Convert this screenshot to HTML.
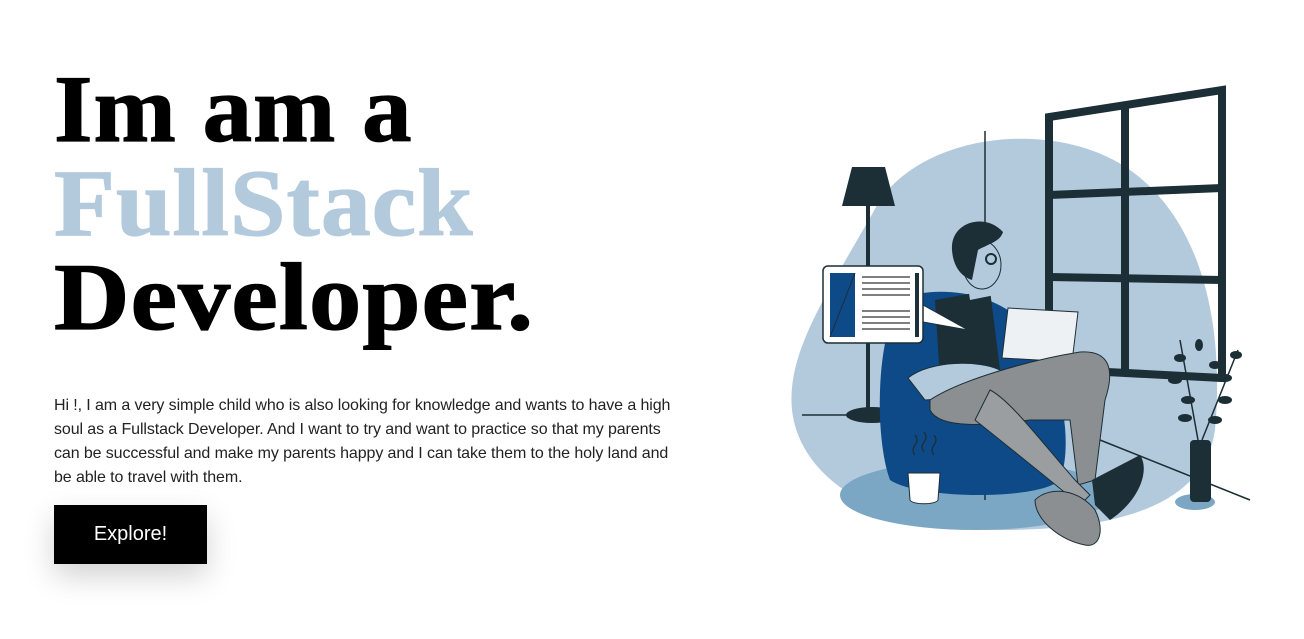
<!DOCTYPE html>
<html><head><meta charset="utf-8"><style>
html,body{margin:0;padding:0;background:#fff;width:1304px;height:639px;overflow:hidden}
h1{position:absolute;left:54px;top:62px;margin:0;font-family:"Liberation Serif",serif;font-weight:bold;font-size:95px;line-height:94px;color:#000;-webkit-text-stroke:1.2px currentColor}
h1 span{display:inline-block;transform-origin:0 0;white-space:nowrap}
h1 .a{transform:scaleX(1.04);letter-spacing:1px}
h1 .b{color:#b3cadd;transform:scaleX(1.05);letter-spacing:1px}
h1 .c{transform:scaleX(1.1);letter-spacing:1px}
p{position:absolute;left:54px;top:394px;margin:0;font-family:"Liberation Sans",sans-serif;font-size:16px;line-height:24px;color:#222;letter-spacing:-0.1px;white-space:nowrap}
.btn{position:absolute;left:54px;top:505px;width:153px;height:59px;background:#000;color:#fff;font-family:"Liberation Sans",sans-serif;font-size:20px;line-height:59px;text-align:center;box-shadow:0 12px 30px rgba(0,0,0,0.18)}
svg{position:absolute;left:0;top:0}
</style></head><body>
<h1><span class="a">Im am a</span><br><span class="b">FullStack</span><br><span class="c">Developer.</span></h1>
<p>Hi !, I am a very simple child who is also looking for knowledge and wants to have a high<br>soul as a Fullstack Developer. And I want to try and want to practice so that my parents<br>can be successful and make my parents happy and I can take them to the holy land and<br>be able to travel with them.</p>
<div class="btn">Explore!</div>
<svg width="1304" height="639" viewBox="0 0 1304 639">
<path d="M880 200 C930 130 1060 120 1130 170 C1200 220 1225 320 1215 430 C1205 500 1130 530 1000 530 C880 530 800 480 792 410 C786 350 830 290 880 200Z" fill="#b3cadd"/>
<ellipse cx="975" cy="495" rx="135" ry="35" fill="#7ba7c4"/>
<ellipse cx="1195" cy="502" rx="20" ry="8" fill="#7ba7c4"/>
<line x1="985" y1="131" x2="985" y2="500" stroke="#1c2e36" stroke-width="1.5"/>
<line x1="802" y1="415" x2="880" y2="415" stroke="#1c2e36" stroke-width="1.5"/>
<line x1="1100" y1="440" x2="1250" y2="500" stroke="#1c2e36" stroke-width="1.5"/>
<g stroke="#1c2e36" stroke-width="8" fill="none">
<path d="M1049 369 L1049 117 L1222 90 L1222 378 Z"/>
<line x1="1125" y1="105" x2="1125" y2="373"/>
<line x1="1049" y1="195" x2="1222" y2="188"/>
<line x1="1049" y1="277" x2="1222" y2="280"/>
</g>
<path d="M852 167 L885 167 L895 206 L842 206Z" fill="#1c2e36"/>
<rect x="866" y="206" width="4" height="208" fill="#1c2e36"/>
<ellipse cx="872" cy="415" rx="26" ry="8" fill="#1c2e36"/>
<path d="M900 300 C930 285 990 290 1020 320 C1060 360 1075 440 1060 480 C1040 500 920 500 890 480 C875 440 875 340 900 300Z" fill="#0d4a87"/>
<path d="M935 300 L990 290 L1000 370 L940 380 Z" fill="#1c2e36"/>
<path d="M908 378 C930 360 980 360 1000 370 L1000 395 L925 400 Z" fill="#b3cadd" stroke="#1c2e36"/>
<path d="M965 268 L990 270 L995 295 L970 300Z" fill="#b3cadd"/>
<ellipse cx="982" cy="265" rx="19" ry="24" fill="#b3cadd" stroke="#1c2e36"/>
<path d="M952 250 C950 222 985 212 1003 232 C1000 242 988 244 978 250 L972 280 C960 276 953 265 952 250Z" fill="#1c2e36"/>
<circle cx="991" cy="259" r="5" fill="none" stroke="#1c2e36" stroke-width="2"/>
<path d="M1008 308 L1078 312 L1072 362 L1002 358Z" fill="#eef1f3" stroke="#1c2e36"/>
<path d="M930 400 C960 380 1030 360 1080 352 C1110 350 1115 370 1105 400 L1095 480 L1078 485 L1070 420 L1030 420 C990 425 940 430 930 410Z" fill="#8b8f91" stroke="#1c2e36"/>
<path d="M990 390 C1010 400 1040 440 1075 480 L1090 495 L1080 505 C1050 480 1000 440 975 420Z" fill="#9a9ea0" stroke="#1c2e36"/>
<path d="M1092 480 L1140 455 C1150 470 1140 500 1110 520 L1095 505Z" fill="#1c2e36"/>
<path d="M1035 500 C1050 485 1080 490 1095 510 C1105 530 1100 548 1085 545 C1060 540 1035 520 1035 500Z" fill="#8b8f91" stroke="#1c2e36"/>
<path d="M908 473 L940 473 L938 500 C936 505 912 505 910 500Z" fill="#fff" stroke="#1c2e36"/>
<path d="M915 435 q4 5 0 10 q-4 5 0 10 M924 432 q4 5 0 10 q-4 5 0 10 M934 435 q4 5 0 10 q-4 5 0 10" stroke="#1c2e36" fill="none" stroke-width="1.2"/>
<path d="M923 305 L968 330 L923 322Z" fill="#fff" stroke="#1c2e36"/>
<rect x="823" y="266" width="100" height="77" rx="5" fill="#fff" stroke="#1c2e36" stroke-width="1.5"/>
<rect x="830" y="273" width="25" height="64" fill="#0d4a87"/>
<line x1="855" y1="273" x2="830" y2="337" stroke="#1c2e36"/>
<rect x="915" y="273" width="4" height="64" fill="#1c2e36"/>
<g stroke="#555" stroke-width="1.5">
<line x1="862" y1="277" x2="910" y2="277"/><line x1="862" y1="283" x2="910" y2="283"/><line x1="862" y1="289" x2="910" y2="289"/><line x1="862" y1="295" x2="910" y2="295"/>
<line x1="862" y1="311" x2="910" y2="311"/><line x1="862" y1="317" x2="910" y2="317"/><line x1="862" y1="323" x2="910" y2="323"/><line x1="862" y1="329" x2="910" y2="329"/>
</g>
<rect x="1190" y="440" width="21" height="62" rx="4" fill="#1c2e36"/>
<g fill="#1c2e36">
<path d="M1198 440 L1180 340 M1202 440 L1238 350" stroke="#1c2e36" stroke-width="1.5"/>
<ellipse cx="1180" cy="358" rx="6" ry="4"/><ellipse cx="1175" cy="380" rx="7" ry="4"/><ellipse cx="1188" cy="400" rx="7" ry="4"/><ellipse cx="1185" cy="418" rx="7" ry="4"/><ellipse cx="1199" cy="345" rx="4" ry="6"/>
<ellipse cx="1236" cy="355" rx="6" ry="4"/><ellipse cx="1225" cy="378" rx="7" ry="4"/><ellipse cx="1225" cy="400" rx="7" ry="4"/><ellipse cx="1215" cy="420" rx="7" ry="4"/><ellipse cx="1215" cy="365" rx="6" ry="4"/>
</g>
</svg>
</body></html>
